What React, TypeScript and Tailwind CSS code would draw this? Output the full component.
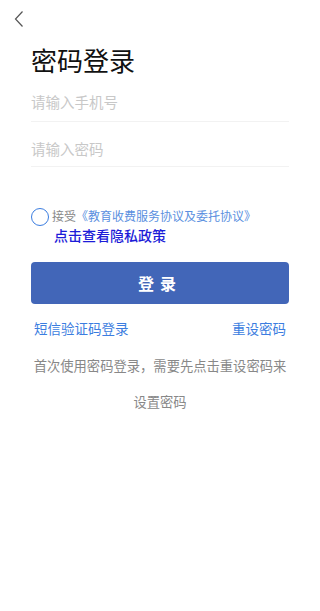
const font = "font-['Noto_Sans_CJK_SC','Noto_Sans',sans-serif]"

export default function App() {
  return (
    <div className={`w-[320px] h-[611px] bg-white ${font} flex flex-col`}>
      <div className="h-[38px] pl-[13px] pt-[10px]">
        <svg width="12" height="18" viewBox="0 0 12 18" fill="none">
          <path d="M9.5 1.5 L2.5 9 L9.5 16.5" stroke="#555" strokeWidth="1.2" />
        </svg>
      </div>

      <div className="px-[31px]">
        <h1 className="text-[26px] leading-[36px] text-[#111] mt-[4px]">密码登录</h1>

        <div className="h-[44px] pt-[14px] border-b border-[#f2f2f2]">
          <div className="text-[14.5px] leading-[20px] text-[#c8c8c8]">请输入手机号</div>
        </div>
        <div className="h-[45px] pt-[17px] border-b border-[#f2f2f2]">
          <div className="text-[14.5px] leading-[20px] text-[#c8c8c8]">请输入密码</div>
        </div>

        <div className="mt-[40px] flex items-start">
          <div className="w-[18px] h-[18px] rounded-full border-[1.5px] border-[#3b7de0] shrink-0 mt-[1px]" />
          <div className="ml-[3px]">
            <div className="text-[12px] leading-[18px] whitespace-nowrap">
              <span className="text-[#888]">接受</span>
              <span className="text-[#5a8fe0]">《教育收费服务协议及委托协议》</span>
            </div>
            <div className="text-[14px] leading-[20px] text-[#1c1cd8] font-medium ml-[2px]">
              点击查看隐私政策
            </div>
          </div>
        </div>

        <button className="mt-[17px] w-full h-[42px] rounded-[4px] bg-[#4266b8] text-white text-[16px] font-bold tracking-[6px]">
          登录
        </button>

        <div className="mt-[13px] flex justify-between px-[3px] text-[13.5px] leading-[22px] text-[#3b7de0]">
          <span>短信验证码登录</span>
          <span>重设密码</span>
        </div>

        <p className="mt-[9px] px-[2px] text-center text-[13.3px] leading-[36px] text-[#888]">
          首次使用密码登录，需要先点击重设密码来设置密码
        </p>
      </div>
    </div>
  )
}
